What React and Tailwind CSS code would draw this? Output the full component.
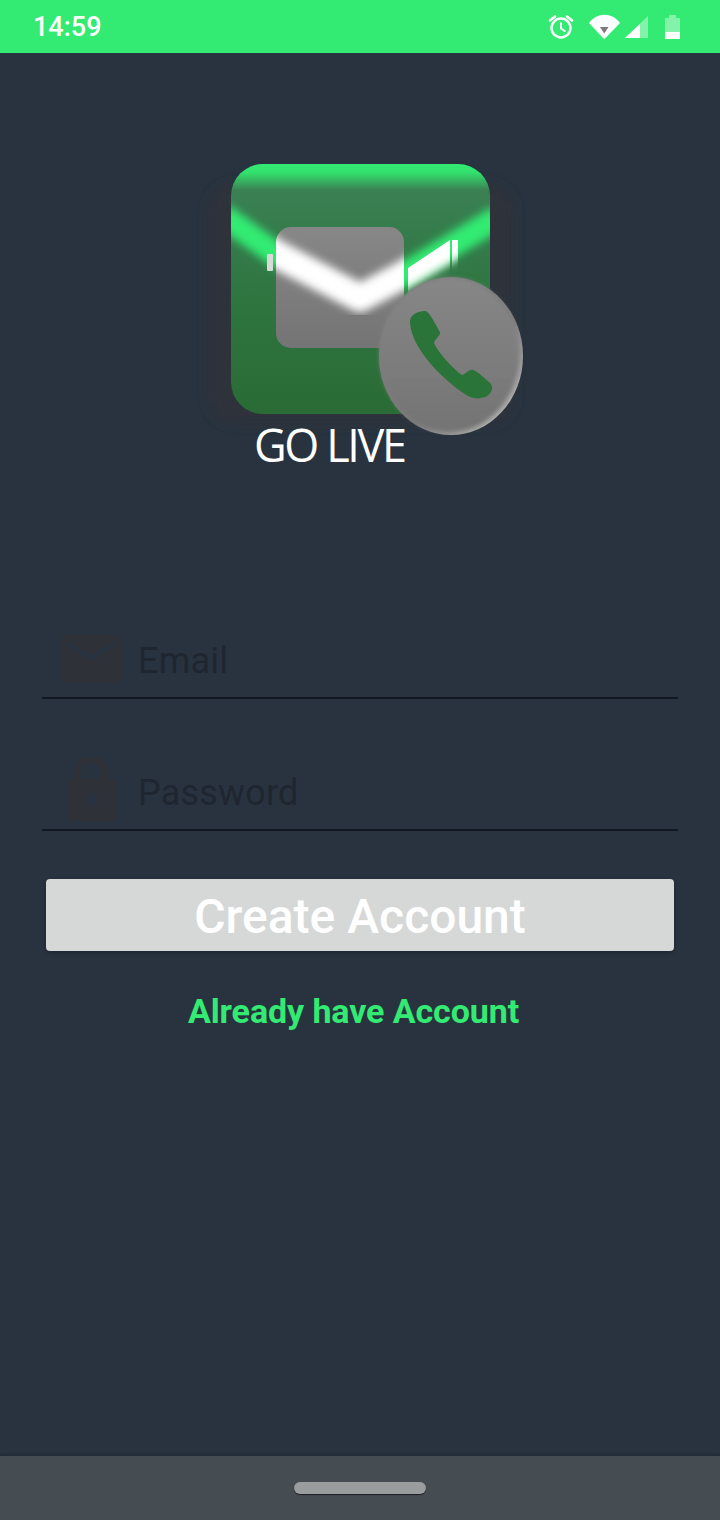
const StatusBar = () => {
    return (
        <div className="h-[53px] bg-[#33EB72] flex items-center justify-between pl-[33px] pr-[40px] shrink-0">
            <span className="mt-[2px] text-white text-[27px] font-medium font-['Roboto',sans-serif] leading-none">14:59</span>
            <svg width="132" height="30" viewBox="548 12 132 30" className="block">
                <g fill="none" stroke="#fff" strokeWidth="2.4">
                    <circle cx="561" cy="28" r="9.5" />
                    <path d="M561 22.5V28.5L565.5 31.5" strokeWidth="2" />
                    <path d="M550 20.5L555 16.5M572 20.5L567 16.5" strokeWidth="2.6" strokeLinecap="round" />
                </g>
                <path d="M589 23C597 12 612 12 620 23L605 38.5C604.5 39 604 39 603.5 38.5Z" fill="#fff" />
                <path d="M600 27H608.5L604.2 33.5Z" fill="#7a7a7a" />
                <path d="M625 38L648 16V38Z" fill="#fff" fillOpacity="0.4" />
                <path d="M625 38L640 24V38Z" fill="#fff" />
                <path d="M665 18H669V15H676V18H680V32H665Z" fill="#fff" fillOpacity="0.4" />
                <rect x="665" y="32" width="15" height="7" fill="#fff" />
            </svg>
        </div>
    )
}

const Logo = () => {
    return (
        <svg width="350" height="290" viewBox="190 150 350 290" className="block">
            <defs>
                <linearGradient id="tile" x1="0" y1="0" x2="0" y2="1">
                    <stop offset="0" stopColor="#33EB72" />
                    <stop offset="0.035" stopColor="#33E06D" />
                    <stop offset="0.105" stopColor="#3A8053" />
                    <stop offset="0.55" stopColor="#2E7540" />
                    <stop offset="1" stopColor="#2A6B35" />
                </linearGradient>
                <linearGradient id="grey" x1="0" y1="0" x2="0" y2="1">
                    <stop offset="0" stopColor="#878787" />
                    <stop offset="1" stopColor="#747474" />
                </linearGradient>
                <linearGradient id="rim" x1="0" y1="0" x2="1" y2="1">
                    <stop offset="0.6" stopColor="#7d7d7d" />
                    <stop offset="1" stopColor="#c8cac6" />
                </linearGradient>
                <filter id="soft" x="-20%" y="-20%" width="140%" height="140%">
                    <feGaussianBlur stdDeviation="4" />
                </filter>
                <filter id="edge" x="-20%" y="-20%" width="140%" height="140%">
                    <feGaussianBlur stdDeviation="2" />
                </filter>
                <filter id="halo" x="-20%" y="-20%" width="140%" height="140%">
                    <feGaussianBlur stdDeviation="6" />
                </filter>
                <clipPath id="tileClip">
                    <rect x="231" y="164" width="259" height="250" rx="32" />
                </clipPath>
                <clipPath id="camClip">
                    <rect x="276" y="227" width="128" height="121" rx="15" />
                    <path d="M408 268L450 240V300H408Z" />
                    <rect x="452" y="240" width="6" height="39" />
                </clipPath>
            </defs>

            <rect x="208" y="184" width="306" height="240" rx="26" fill="#2D333B" filter="url(#halo)" />
            <rect x="231" y="164" width="259" height="250" rx="32" fill="url(#tile)" />
            <g clipPath="url(#tileClip)">
                <path d="M222 215L276 254L360 298L403 275L499 217" fill="none" stroke="#33EB72" strokeWidth="24" strokeLinejoin="round" filter="url(#soft)" />
            </g>

            <rect x="276" y="227" width="128" height="121" rx="15" fill="url(#grey)" />
            <rect x="267" y="254" width="6" height="17" rx="1" fill="#d9d9d9" />
            <g clipPath="url(#camClip)">
                <path d="M222 215L276 254L360 298L403 275L499 217" fill="none" stroke="#fff" strokeWidth="28" strokeLinejoin="round" filter="url(#soft)" />
            </g>

            <ellipse cx="451" cy="356" rx="72" ry="79" fill="url(#rim)" />
            <ellipse cx="449.5" cy="355" rx="70" ry="77" fill="url(#grey)" filter="url(#edge)" />
            <path
                d="M410 323C409 316 416 311 425 311C428 311 431 316 440 332C441 335 435 339 434 343C438 352 452 368 462 375C466 374 469 369 473 370C477 371 487 380 491 384C494 388 491 395 485 397C480 399 473 399 468 396C444 381 412 350 410 323Z"
                fill="#2A7439"
            />
        </svg>
    )
}

const Field = ({ icon, label, className }) => {
    return (
        <div className={`flex items-end h-[72px] border-b-2 border-[#12181F] ${className}`}>
            <div className="w-[96px] h-full flex items-end justify-center pl-[2px]">{icon}</div>
            <span className="text-[#1F2630] text-[36px] leading-[42px] mb-[15px] tracking-[0.2px] font-['Roboto',sans-serif]">{label}</span>
        </div>
    )
}

const App = () => {
    return (
        <div className="w-[720px] h-[1520px] flex flex-col bg-[#28333F] overflow-hidden">
            <StatusBar />

            <main className="flex-1 flex flex-col">
                <div className="pt-[97px] pl-[190px]">
                    <Logo />
                </div>
                <h1 className="-mt-[22px] pl-[254px] text-white text-[45px] leading-[54px] tracking-[-2.4px] font-medium font-['Open_Sans',sans-serif]">GO LIVE</h1>

                <div className="mt-[155px] px-[42px]">
                    <Field
                        label="Email"
                        icon={
                            <svg width="60" height="48" viewBox="0 0 60 48" className="mb-[14px]">
                                <rect width="60" height="48" rx="4" fill="#2E3238" />
                                <path d="M5 8L30 23L55 8" fill="none" stroke="#28333F" strokeWidth="5" />
                            </svg>
                        }
                    />
                    <Field
                        label="Password"
                        className="mt-[60px]"
                        icon={
                            <svg width="48" height="63" viewBox="0 0 48 63" className="mb-[8px]">
                                <path d="M10 22V17C10 -4 38 -4 38 17V22" fill="none" stroke="#2E3238" strokeWidth="7" />
                                <rect y="21" width="48" height="42" rx="3" fill="#2E3238" />
                                <circle cx="24" cy="42" r="6.5" fill="#28333F" />
                            </svg>
                        }
                    />

                    <button className="mt-[48px] mx-[4px] w-[628px] h-[72px] pt-[3px] rounded-[4px] bg-[#D6D8D7] shadow-[0_2px_4px_rgba(0,0,0,0.25)] text-white text-[48px] font-medium font-['Roboto',sans-serif] flex items-center justify-center">
                        Create Account
                    </button>

                    <p className="mt-[40px] pr-[13px] text-center text-[#33EB72] text-[34px] leading-[40px] tracking-[-0.1px] font-bold font-['Roboto',sans-serif]">Already have Account</p>
                </div>
            </main>

            <div className="h-[64px] shrink-0 bg-[#464D52] shadow-[0_-2px_2px_rgba(0,0,0,0.15)] flex items-center justify-center">
                <div className="w-[132px] h-[12px] rounded-full bg-[#9A9D9D] shadow-[0_1px_1px_rgba(0,0,0,0.6)]" />
            </div>
        </div>
    )
}

export default App;
